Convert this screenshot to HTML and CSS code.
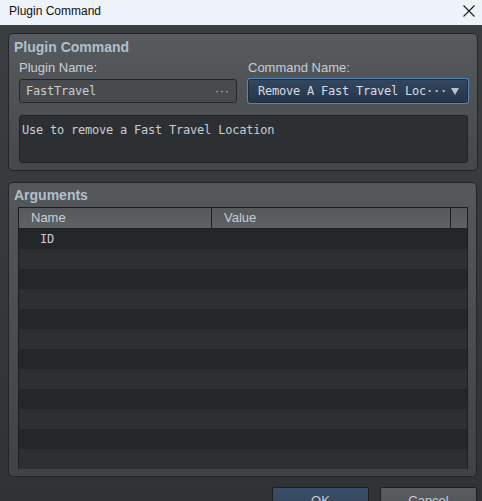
FILE: index.html
```html
<!DOCTYPE html>
<html>
<head>
<meta charset="utf-8">
<link rel="stylesheet" href="styles.css">
</head>
<body>
<div class="window">
  <div class="titlebar">
    <span class="title">Plugin Command</span>
    <svg class="close" width="12" height="12" viewBox="0 0 12 12"><path d="M0.5 0.5 L11.5 11.5 M11.5 0.5 L0.5 11.5" stroke="#1a1a1a" stroke-width="1.1" fill="none"/></svg>
  </div>
  <div class="main">
    <section class="group group-cmd">
      <div class="group-title">Plugin Command</div>
      <div class="fields">
        <div class="field">
          <div class="label">Plugin Name:</div>
          <div class="input">
            <span class="mono">FastTravel</span>
            <span class="dots">···</span>
          </div>
        </div>
        <div class="field">
          <div class="label">Command Name:</div>
          <div class="select">
            <span class="mono">Remove A Fast Travel Loc···</span>
            <svg class="arrow" width="8" height="7" viewBox="0 0 8 7"><path d="M0 0 H8 L4 7 Z" fill="#b9c2cc"/></svg>
          </div>
        </div>
      </div>
      <div class="desc"><span class="mono">Use to remove a Fast Travel Location</span></div>
    </section>
    <section class="group group-args">
      <div class="group-title">Arguments</div>
      <div class="table">
        <div class="thead">
          <div class="th th-name">Name</div>
          <div class="th th-value">Value</div>
          <div class="th th-corner"></div>
        </div>
        <div class="rows">
          <div class="row"><span class="mono cell-id">ID</span></div>
          <div class="row"></div>
          <div class="row"></div>
          <div class="row"></div>
          <div class="row"></div>
          <div class="row"></div>
          <div class="row"></div>
          <div class="row"></div>
          <div class="row"></div>
          <div class="row"></div>
          <div class="row"></div>
          <div class="row"></div>
        </div>
      </div>
    </section>
    <div class="buttons">
      <div class="btn btn-ok">OK</div>
      <div class="btn btn-cancel">Cancel</div>
    </div>
  </div>
</div>
</body>
</html>
```

FILE: styles.css
```css
html, body {
  margin: 0;
  padding: 0;
  width: 482px;
  height: 501px;
  overflow: hidden;
  background: #303336;
}
.window {
  width: 482px;
  height: 501px;
  display: flex;
  flex-direction: column;
  font-family: "Liberation Sans", Arial, sans-serif;
}
.titlebar {
  height: 25px;
  flex: none;
  background: #eef2f9;
  display: flex;
  align-items: center;
  justify-content: space-between;
  padding: 0 3px 0 9px;
  box-sizing: border-box;
}
.title {
  font-size: 12px;
  color: #111;
  margin-top: -3px;
}
.close {
  margin-right: 4px;
  margin-top: -3px;
}
.main {
  flex: 1;
  min-height: 0;
  background: linear-gradient(#3b3e41, #303336);
  padding: 8px 4px 0 8px;
  display: flex;
  flex-direction: column;
  overflow: hidden;
}
.group {
  flex: none;
  border: 1px solid #222426;
  border-radius: 5px;
  background: linear-gradient(#575b5e, #45484b);
  box-sizing: border-box;
}
.group-cmd {
  height: 138px;
  padding: 4px 9px 0 10px;
}
.group-args {
  margin-top: 11px;
  height: 295px;
  padding: 3px 8px 0 9px;
  background: linear-gradient(#54585b, #404346);
  margin-right: 1px;
}
.group-title {
  font-weight: bold;
  font-size: 14px;
  line-height: 18px;
  color: #b2bfcd;
  margin-left: -5px;
}
.group-args .group-title {
  margin-left: -4px;
}
.fields {
  display: grid;
  grid-template-columns: 218px 220px;
  column-gap: 11px;
  margin-top: 3px;
}
.label {
  font-size: 13px;
  line-height: 18px;
  color: #c7ced6;
  margin-bottom: 2px;
}
.mono {
  font-family: "DejaVu Sans Mono", "Liberation Mono", monospace;
  font-size: 12px;
  letter-spacing: -0.22px;
  white-space: pre;
}
.input {
  height: 24px;
  box-sizing: border-box;
  border: 1px solid #232527;
  border-radius: 3px;
  background: #484b4e;
  display: flex;
  align-items: center;
  justify-content: space-between;
  padding: 0 6px 0 6px;
  color: #c9cdd1;
}
.dots {
  font-size: 12px;
  color: #b8bec4;
  letter-spacing: 1px;
}
.select {
  height: 24px;
  box-sizing: border-box;
  border: 1px solid #1f2c3b;
  outline: 1px solid #5a86b7;
  border-radius: 2px;
  background: linear-gradient(#32465e, #263649);
  display: flex;
  align-items: center;
  justify-content: space-between;
  padding: 0 8px 0 9px;
  color: #d6dde6;
}
.arrow {
  margin-top: 1px;
}
.desc {
  margin-top: 12px;
  height: 48px;
  box-sizing: border-box;
  border: 1px solid #202224;
  border-radius: 3px;
  background: #2d3033;
  padding: 5px 2px;
  color: #c8cdd2;
  line-height: 16px;
}
.table {
  margin-top: 3px;
  height: 262px;
  box-sizing: border-box;
  border: 1px solid #1b1d1f;
  display: flex;
  flex-direction: column;
  background: #2c3033;
}
.thead {
  height: 20px;
  flex: none;
  display: flex;
  border-bottom: 1px solid #1b1d1f;
  background: linear-gradient(#55595c, #5e6265);
}
.th {
  font-size: 13px;
  line-height: 20px;
  color: #c7ced6;
  padding-left: 12px;
  box-sizing: border-box;
}
.th-name {
  width: 193px;
  border-right: 1px solid #1b1d1f;
}
.th-value {
  width: 239px;
  border-right: 1px solid #1b1d1f;
}
.th-corner {
  flex: 1;
}
.rows {
  flex: 1;
  display: flex;
  flex-direction: column;
}
.row {
  height: 20px;
  flex: none;
  background: #2c3033;
  display: flex;
  align-items: center;
}
.row:nth-child(odd) {
  background: #24272a;
}
.cell-id {
  margin-left: 21px;
  color: #c9cdd1;
}
.buttons {
  flex: none;
  display: flex;
  justify-content: flex-end;
  gap: 11px;
  margin-top: 10px;
  padding-right: 1px;
}
.btn {
  width: 97px;
  height: 26px;
  box-sizing: border-box;
  border: 1px solid #1c1e20;
  border-radius: 2px;
  font-size: 13px;
  color: #c7ced6;
  text-align: center;
  padding-top: 5px;
}
.btn-ok {
  background: linear-gradient(#3a4f68, #2f4259);
}
.btn-cancel {
  background: linear-gradient(#5a5e61, #4e5255);
}
```
